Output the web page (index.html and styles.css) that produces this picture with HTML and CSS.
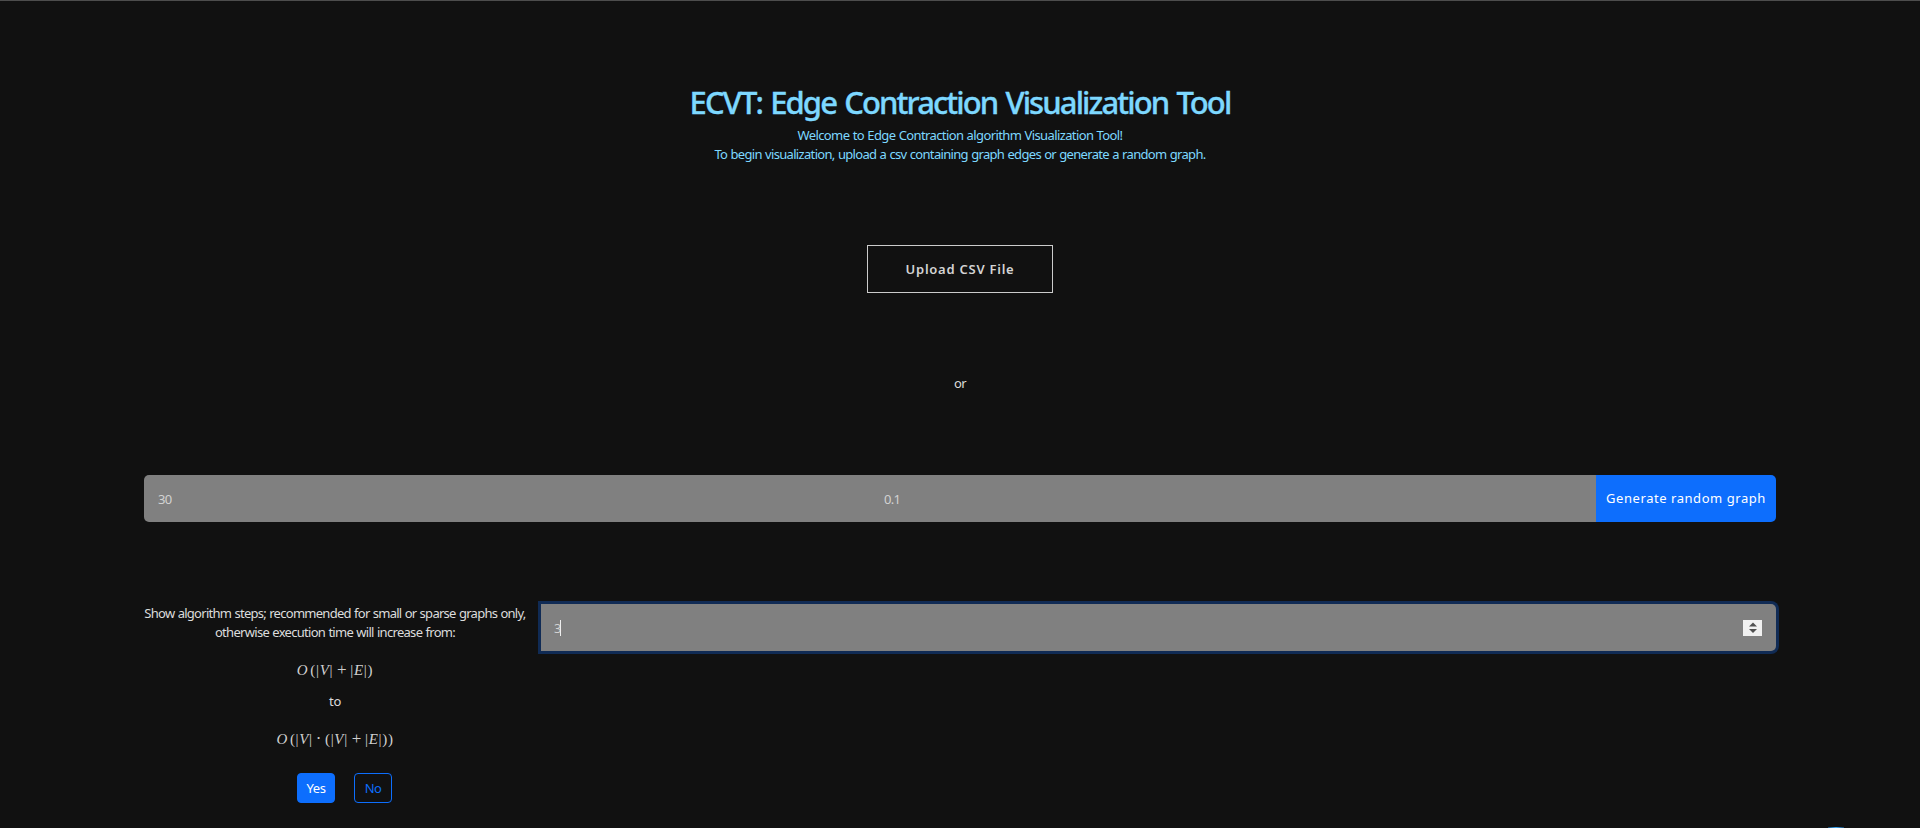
FILE: index.html
```html
<!DOCTYPE html>
<html lang="en">
<head>
<meta charset="utf-8">
<title>ECVT</title>
<link rel="stylesheet" href="styles.css">
</head>
<body>
<main class="page">
  <header class="intro">
    <h1 class="title"><span>ECVT: Edge Contraction Visualization Tool</span></h1>
    <p class="lead"><span class="lead-one">Welcome to Edge Contraction algorithm Visualization Tool!</span><br><span class="lead-two">To begin visualization, upload a csv containing graph edges or generate a random graph.</span></p>
  </header>
  <button class="upload">Upload CSV File</button>
  <p class="or">or</p>
  <div class="generator">
    <div class="field">30</div>
    <div class="field">0.1</div>
    <button class="generate">Generate random graph</button>
  </div>
  <div class="steps">
    <section class="options">
      <p class="note"><span class="note-one">Show algorithm steps; recommended for small or sparse graphs only,</span><br><span class="note-two">otherwise execution time will increase from:</span></p>
      <div class="formula formula-linear"><i>O</i><b class="thin"></b><span>(|</span><i>V</i><span>|</span><span class="op">+</span><span>|</span><i>E</i><span>|)</span></div>
      <p class="to">to</p>
      <div class="formula formula-product"><i>O</i><b class="thin"></b><span>(|</span><i>V</i><span>|</span><span class="op dot">·</span><span>(|</span><i>V</i><span>|</span><span class="op">+</span><span>|</span><i>E</i><span>|))</span></div>
      <div class="choices"><button class="choice yes">Yes</button><button class="choice no">No</button></div>
    </section>
    <div class="number"><span class="value">3</span><span class="caret"></span>
      <svg class="spinner" width="19" height="16" viewBox="0 0 19 16"><rect width="19" height="16" fill="#f0f0f0"/><path d="M6 6.5h8L10 2.5zM6 9h8l-4 4z" fill="#505050"/></svg>
    </div>
  </div>
</main>
<div class="spark"></div>
</body>
</html>
```
FILE: styles.css
```css
* { box-sizing: border-box; }
body {
  margin: 0;
  height: 828px;
  overflow: hidden;
  position: relative;
  background: #111;
  border-top: 1px solid #4d4d4d;
  color: #dcdcdc;
  font: 13px/19px "Segoe UI", "Noto Sans", sans-serif;
}
h1, p { margin: 0; }
button { font: inherit; margin: 0; padding: 0; white-space: nowrap; }
.page {
  width: 1632px;
  margin: 0 auto;
  padding-top: 82px;
  display: flex;
  flex-direction: column;
  align-items: center;
}
.intro { text-align: center; color: #7dd8ff; white-space: nowrap; }
.title {
  font-size: 31px;
  line-height: 38px;
  font-weight: 500;
  letter-spacing: -1.9px;
  word-spacing: 2px;
  -webkit-text-stroke: .35px #7dd8ff;
}
.lead { margin-top: 5px; }
.lead-one { letter-spacing: -.61px; word-spacing: .5px; }
.lead-two { letter-spacing: -.67px; word-spacing: .5px; }
.upload {
  width: 186px;
  height: 48px;
  margin-top: 81px;
  border: 1px solid #ccc;
  background: transparent;
  color: #d4d4d4;
  font-weight: 600;
  letter-spacing: .75px;
}
.or { margin-top: 81px; letter-spacing: -.6px; }
.generator {
  width: 100%;
  height: 47px;
  margin-top: 82px;
  display: grid;
  grid-template-columns: 726px 726px 180px;
  border-radius: 5px;
  overflow: hidden;
}
.field { background: gray; padding: 15px 14px; color: #d2d2d2; letter-spacing: -.7px; }
.generate { border: 0; padding-bottom: 2px; background: #0d6efd; color: #fff; letter-spacing: .55px; }
.steps {
  width: 100%;
  margin-top: 82px;
  display: grid;
  grid-template-columns: 382px 1235px;
  column-gap: 15px;
  align-items: start;
}
.options { text-align: center; white-space: nowrap; }
.note-one { letter-spacing: -.72px; word-spacing: .5px; }
.note-two { letter-spacing: -.7px; word-spacing: .5px; }
.formula {
  height: 16px;
  display: flex;
  justify-content: center;
  align-items: center;
  font: 15px/16px "Liberation Serif", serif;
  letter-spacing: .65px;
  color: #d0d0d0;
}
.formula-linear { margin-top: 20px; }
.formula-product { margin-top: 20px; }
.thin { width: 2px; }
.op { margin: 0 3px 0 4px; font-size: 17px; }
.dot { margin: 0 3px; }
.to { margin-top: 14px; letter-spacing: -.4px; }
.choices { margin-top: 26px; display: flex; justify-content: center; gap: 19px; padding-left: 19px; }
.choice { width: 38px; height: 30px; border: 1px solid #0d6efd; border-radius: 4px; letter-spacing: -.5px; }
.yes { background: #0d6efd; color: #fff; }
.no { background: transparent; color: #0d6efd; }
.number {
  height: 47px;
  display: flex;
  align-items: center;
  padding: 0 14px 0 13px;
  background: gray;
  border-radius: 0 5px 5px 0;
  box-shadow: 0 0 0 3px #102b55;
  color: #d2d2d2;
}
.value { width: 6px; padding-top: 1px; }
.caret { width: 1px; height: 16px; background: #eee; }
.spinner { margin-left: auto; }
.spark {
  position: absolute;
  right: 76px;
  bottom: 0;
  width: 16px;
  height: 1px;
  background: linear-gradient(90deg, #17446a, #3da5ef, #17446a);
}
```
